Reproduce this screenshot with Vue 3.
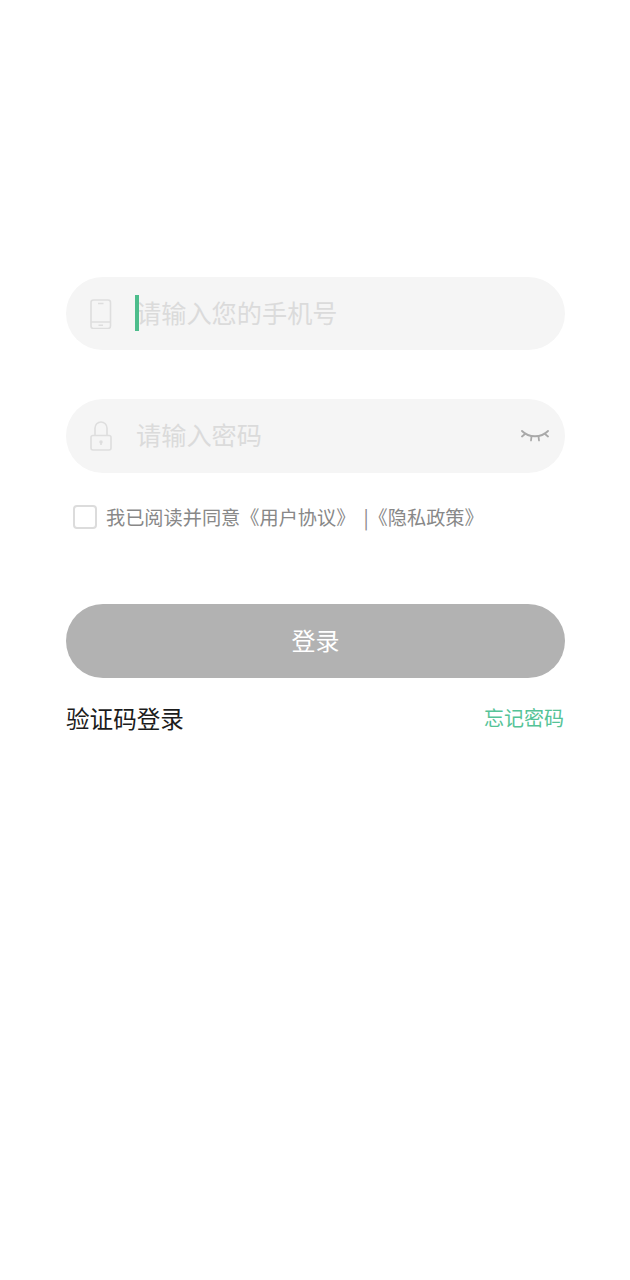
<script setup>
const agreeParts = ['我已阅读并同意', '《用户协议》', '|《隐私政策》']
</script>

<template>
  <div class="page">
    <div class="field first">
      <svg class="field-icon" width="22" height="30" viewBox="0 0 22 30" fill="none">
        <rect x="1" y="1" width="19.500" height="28.500" rx="2.500" />
        <path d="M1 23h19.500M8 4.500h5.500M8.500 26.200h4.500" />
      </svg>
      <div class="input-wrap">
        <span class="caret"></span>
        <span class="placeholder">请输入您的手机号</span>
      </div>
    </div>

    <div class="field second">
      <svg class="field-icon" width="22" height="30" viewBox="0 0 22 30" fill="none">
        <rect x="1" y="14.500" width="20" height="14.500" rx="2" />
        <path d="M5 14.500V7a6 6 0 0 1 12 0v7.500" />
        <circle class="dot" cx="11" cy="21" r="1.700" />
        <path d="M11 21v3" />
      </svg>
      <div class="input-wrap">
        <span class="placeholder">请输入密码</span>
      </div>
      <svg class="eye" width="28" height="14" viewBox="0 0 28 14" fill="none">
        <path d="M1 2c7 7 19 7 26 0" />
        <path d="M4 5L1 7.500M24 5l3 2.500M10.500 7.500l-.5 4M17.500 7.500l.5 4" />
      </svg>
    </div>

    <div class="agree">
      <span class="checkbox"></span>
      <span class="agree-text">{{ agreeParts[0] }}</span>
      <span class="agree-text link">{{ agreeParts[1] }}</span>
      <span class="agree-text policy">{{ agreeParts[2] }}</span>
    </div>

    <button class="login-btn">登录</button>

    <div class="bottom-row">
      <span class="code-login">验证码登录</span>
      <span class="forget">忘记密码</span>
    </div>
  </div>
</template>

<style>
html,
body {
  margin: 0;
  background: #fff;
}
</style>

<style scoped>
.page {
  box-sizing: border-box;
  width: 630px;
  height: 1280px;
  padding: 277px 65px 0 66px;
  background: #fff;
  font-family: "Noto Sans CJK SC", "Liberation Sans", sans-serif;
}

.field {
  display: flex;
  align-items: center;
  height: 73px;
  padding: 0 16px 0 24px;
  border-radius: 37px;
  background: #f5f5f5;
}

.second {
  margin-top: 49px;
  height: 74px;
}

.field-icon {
  flex: none;
  stroke: #dedede;
  stroke-width: 1.600;
}

.dot {
  fill: #dedede;
  stroke: none;
}

.input-wrap {
  position: relative;
  flex: 1;
  margin-left: 23px;
  transform: translateY(-2px);
}

.caret {
  position: absolute;
  left: 0;
  top: -2px;
  width: 4px;
  height: 36px;
  background: #4dbd8c;
}

.placeholder {
  display: block;
  padding-left: 1px;
  font-size: 25.200px;
  line-height: 30px;
  color: #dbdbdb;
}

.eye {
  flex: none;
  stroke: #a9a9a9;
  stroke-width: 1.800;
  stroke-linecap: round;
}

.agree {
  display: flex;
  align-items: center;
  height: 30px;
  margin-top: 29px;
  padding-left: 7px;
}

.checkbox {
  box-sizing: border-box;
  width: 24px;
  height: 24px;
  margin-right: 9px;
  border: 2px solid #dcdcdc;
  border-radius: 4px;
  background: #fff;
}

.agree-text {
  font-size: 19.200px;
  line-height: 30px;
  color: #888;
  white-space: nowrap;
}

.policy {
  margin-left: 8px;
}

.login-btn {
  display: block;
  width: 100%;
  height: 74px;
  margin-top: 72px;
  padding: 0 0 3px;
  border: none;
  border-radius: 37px;
  background: #b2b2b2;
  color: #fff;
  font-family: inherit;
  font-size: 24px;
}

.bottom-row {
  display: flex;
  justify-content: space-between;
  align-items: flex-start;
  margin-top: 23px;
}

.code-login {
  font-size: 23.600px;
  line-height: 34px;
  color: #1c1c1c;
}

.forget {
  margin-top: 2px;
  margin-right: 1px;
  font-size: 20px;
  line-height: 30px;
  color: #55c397;
}
</style>
